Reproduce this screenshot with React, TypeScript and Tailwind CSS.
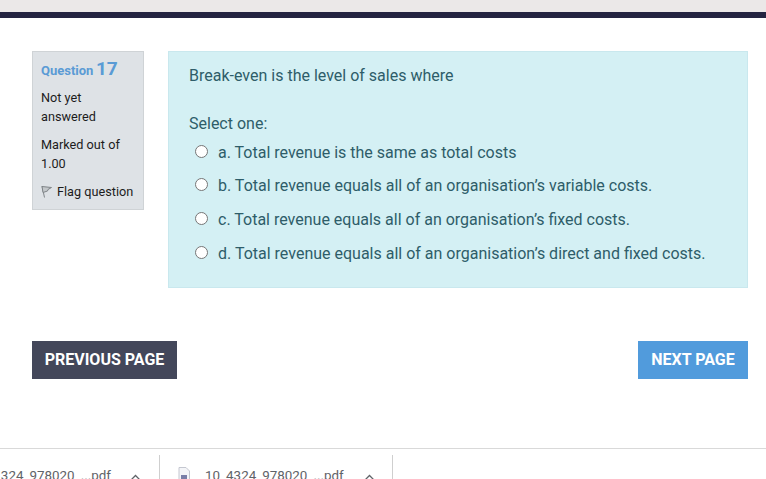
import React from "react";

const options = [
	"a. Total revenue is the same as total costs",
	"b. Total revenue equals all of an organisation’s variable costs.",
	"c. Total revenue equals all of an organisation’s fixed costs.",
	"d. Total revenue equals all of an organisation’s direct and fixed costs.",
];

const optionGaps = ["mt-[9px]", "mt-[13px]", "mt-[14px]", "mt-[14px]"];

const Chevron = () => (
	<svg width="11" height="7" viewBox="0 0 11 7" fill="none" stroke="#5f6368" strokeWidth="1.3">
		<path d="M1 6 L5.5 1.5 L10 6" />
	</svg>
);

const FlagIcon = () => (
	<svg width="11" height="13" viewBox="0 0 11 13" fill="none" stroke="#7f8488" strokeWidth="1">
		<path d="M3.5 12.5 L1 1" />
		<path d="M1 1.5 L10.5 2.5 L7 4.5 L6.5 6 L2 7.5 Z" fill="#c3c7ca" />
	</svg>
);

const FileIcon = () => (
	<svg width="12" height="16" viewBox="0 0 12 16" fill="none">
		<path d="M1 .5 H8 L11.5 4 V16 H1 Z" fill="#f4f5f8" stroke="#c4c7d0" />
		<rect x="3" y="8" width="6" height="6" fill="#7a7fa8" />
	</svg>
);

export default function App() {
	return (
		<div className="w-[766px] h-[479px] overflow-hidden bg-white flex flex-col font-['Roboto',sans-serif]">
			<div className="h-3 bg-[#ebe8e8] shrink-0" />
			<div className="h-1.5 bg-[#242441] shrink-0" />

			<div className="flex gap-6 pl-8 pt-[33px] items-start">
				<div className="w-28 h-[159px] shrink-0 bg-[#dee2e6] border border-[#cfd3d6] pl-2 pt-[5px] text-[12.7px] leading-[19px] text-[#1c1c1c]">
					<div className="h-[25px] flex items-baseline gap-[2.5px] font-bold text-[#5a9bd5]">
						<span className="text-[13px]">Question</span>
						<span className="text-[19px] leading-6">17</span>
					</div>
					<div className="mt-1.5">Not yet<br />answered</div>
					<div className="mt-[9px]">Marked out of<br />1.00</div>
					<div className="mt-[9px] flex items-center gap-[5px]">
						<FlagIcon />
						<span>Flag question</span>
					</div>
				</div>

				<div className="w-[580px] h-[237px] shrink-0 bg-[#d4f0f4] border border-[#c9e8ee] pl-5 pt-3.5 text-base leading-5 text-[#2e5d69]">
					<div>Break-even is the level of sales where</div>
					<div className="mt-7">Select one:</div>
					{options.map((text, i) => (
						<div key={text} className={`flex items-center ${optionGaps[i]} pl-1.5`}>
							<span className="w-[13px] h-[13px] mb-1 rounded-full bg-white border border-[#767676] shrink-0" />
							<span className="ml-2.5">{text}</span>
						</div>
					))}
				</div>
			</div>

			<div className="flex justify-between pl-8 pr-[18px] mt-[53px]">
				<button className="w-[145px] h-[38px] bg-[#43475a] text-white font-bold text-base">PREVIOUS PAGE</button>
				<button className="w-[110px] h-[38px] bg-[#519bdc] text-white font-bold text-base">NEXT PAGE</button>
			</div>

			<div className="mt-[69px] h-[31px] shrink-0 border-t border-[#d9d9d9] flex items-start text-[13.4px] leading-4 text-[#5f6368] overflow-hidden">
				<div className="w-40 h-[24px] mt-[6px] shrink-0 border-r border-[#cfcfcf] flex items-start justify-end pr-[18px]">
					<span className="whitespace-nowrap mt-[13px] mr-[19px]">324_978020_...pdf</span>
					<span className="mt-[19px]"><Chevron /></span>
				</div>
				<div className="w-[233px] h-[24px] mt-[6px] shrink-0 border-r border-[#cfcfcf] flex items-start pl-[18px]">
					<span className="mt-3"><FileIcon /></span>
					<span className="whitespace-nowrap mt-[13px] ml-[15px] mr-5">10_4324_978020_...pdf</span>
					<span className="mt-[19px]"><Chevron /></span>
				</div>
			</div>
		</div>
	);
}
